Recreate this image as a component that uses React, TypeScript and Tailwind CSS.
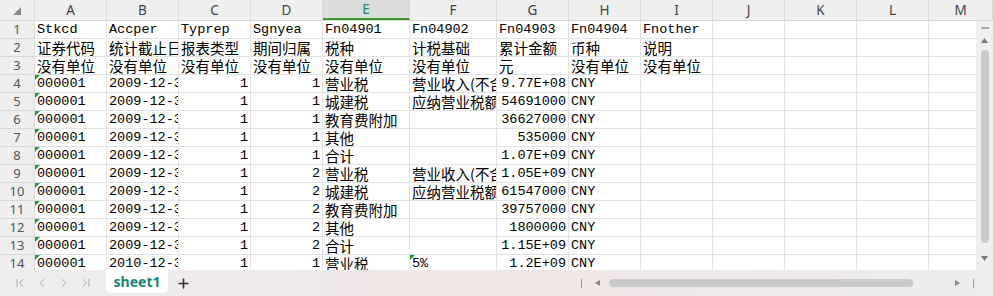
import { ChevronFirst, ChevronLast, ChevronLeft, ChevronRight, Plus } from "lucide-react";

const cols = [
  { l: "A", w: 72 },
  { l: "B", w: 72 },
  { l: "C", w: 72 },
  { l: "D", w: 72 },
  { l: "E", w: 87 },
  { l: "F", w: 87 },
  { l: "G", w: 72 },
  { l: "H", w: 72 },
  { l: "I", w: 72 },
  { l: "J", w: 72 },
  { l: "K", w: 72 },
  { l: "L", w: 72 },
  { l: "M", w: 64 },
];

const rows: string[][] = [
  ["Stkcd", "Accper", "Typrep", "Sgnyea", "Fn04901", "Fn04902", "Fn04903", "Fn04904", "Fnother"],
  ["证券代码", "统计截止日期", "报表类型", "期间归属", "税种", "计税基础", "累计金额", "币种", "说明"],
  ["没有单位", "没有单位", "没有单位", "没有单位", "没有单位", "没有单位", "元", "没有单位", "没有单位"],
  ["000001", "2009-12-31", "1", "1", "营业税", "营业收入(不含税)", "9.77E+08", "CNY", ""],
  ["000001", "2009-12-31", "1", "1", "城建税", "应纳营业税额", "54691000", "CNY", ""],
  ["000001", "2009-12-31", "1", "1", "教育费附加", "", "36627000", "CNY", ""],
  ["000001", "2009-12-31", "1", "1", "其他", "", "535000", "CNY", ""],
  ["000001", "2009-12-31", "1", "1", "合计", "", "1.07E+09", "CNY", ""],
  ["000001", "2009-12-31", "1", "2", "营业税", "营业收入(不含税)", "1.05E+09", "CNY", ""],
  ["000001", "2009-12-31", "1", "2", "城建税", "应纳营业税额", "61547000", "CNY", ""],
  ["000001", "2009-12-31", "1", "2", "教育费附加", "", "39757000", "CNY", ""],
  ["000001", "2009-12-31", "1", "2", "其他", "", "1800000", "CNY", ""],
  ["000001", "2009-12-31", "1", "2", "合计", "", "1.15E+09", "CNY", ""],
  ["000001", "2010-12-31", "1", "1", "营业税", "5%", "1.2E+09", "CNY", ""],
];

const cjk = /[\u4e00-\u9fff]/;

function Flag() {
  return (
    <span className="absolute left-0 top-0 h-0 w-0 border-r-[5px] border-t-[5px] border-r-transparent border-t-[#1f9a3c]" />
  );
}

function Cell({ text, w, right, flag }: { text: string; w: number; right: boolean; flag: boolean }) {
  const font = cjk.test(text)
    ? "font-['Noto_Sans_CJK_SC',sans-serif] text-[14.5px] pt-[2px]"
    : "font-['Liberation_Mono','Noto_Sans_CJK_SC',monospace] text-[13.5px] pt-[1px]";
  return (
    <div
      style={{ width: w }}
      className={`relative flex h-[18px] shrink-0 items-center overflow-hidden whitespace-nowrap border-b border-r border-[#e2e2e2] bg-white leading-none text-black ${right ? "justify-end pr-[2px]" : "pl-[2px]"} ${font}`}
    >
      {flag && <Flag />}
      <span>{text}</span>
    </div>
  );
}

export default function App() {
  return (
    <div className="flex h-[296px] w-[993px] flex-col overflow-hidden bg-white font-['Noto_Sans',sans-serif]">
      {/* column header */}
      <div className="flex h-[21px] shrink-0 border-b border-[#d6d6d6] bg-[#efefef] text-[13.5px] text-[#444]">
        <div className="flex w-[35px] shrink-0 items-center justify-center border-r border-[#dadada]">
          <svg width="8" height="8" viewBox="0 0 8 8" className="mt-[2px]">
            <polygon points="8,0 8,8 0,8" fill="#8a8a8a" />
          </svg>
        </div>
        {cols.map((c) => (
          <div
            key={c.l}
            style={{ width: c.w }}
            className={`flex shrink-0 items-center justify-center border-r border-[#dadada] ${c.l === "E" ? "border-b-2 border-b-[#3d9a2c] bg-[#dcdcdc] text-[#1d8a73]" : ""}`}
          >
            {c.l}
          </div>
        ))}
      </div>

      <div className="flex min-h-0 flex-1">
        <div className="min-w-0 flex-1 overflow-hidden">
          {rows.map((r, i) => (
            <div key={i} className="flex">
              <div className="flex h-[18px] w-[35px] shrink-0 items-center justify-center border-b border-r border-[#dadada] bg-[#efefef] text-[13px] text-[#555]">
                {i + 1}
              </div>
              {cols.map((c, j) => {
                const text = r[j] ?? "";
                const right = i >= 3 && (j === 2 || j === 3 || j === 6);
                const flag = (i >= 3 && j === 0) || (i === 13 && j === 5);
                return <Cell key={c.l} text={text} w={c.w} right={right} flag={flag} />;
              })}
            </div>
          ))}
        </div>

        {/* vertical scrollbar */}
        <div className="flex w-[17px] shrink-0 flex-col items-center bg-[#efefef] pt-[6px]">
          <div className="h-[2px] w-[8px] bg-[#a8a8a8]" />
          <svg width="7" height="5" viewBox="0 0 7 5" className="mt-[9px]">
            <polygon points="3.5,0 7,5 0,5" fill="#7a7a7a" />
          </svg>
          <div className="mt-[7px] h-[193px] w-[8px] rounded-full bg-[#c9c9c9]" />
          <svg width="7" height="5" viewBox="0 0 7 5" className="mt-auto mb-[9px]">
            <polygon points="0,0 7,0 3.5,5" fill="#7a7a7a" />
          </svg>
        </div>
      </div>

      {/* sheet tabs */}
      <div className="flex h-[26px] shrink-0 items-start bg-gradient-to-r from-[#eeeeee] via-[#f0e5e5] to-[#ededed]">
        <div className="flex h-[26px] items-center gap-[8px] pl-[13px] text-[#a0a0a0]">
          <ChevronFirst size={14} strokeWidth={1.5} />
          <ChevronLeft size={14} strokeWidth={1.5} />
          <ChevronRight size={14} strokeWidth={1.5} />
          <ChevronLast size={14} strokeWidth={1.5} />
        </div>
        <div className="ml-[13px] flex h-[23px] w-[62px] items-center justify-center rounded-b-[5px] bg-white text-[14px] font-bold text-[#16877a]">
          sheet1
        </div>
        <div className="flex h-[26px] items-center pl-[8px] text-[#333]">
          <Plus size={15} strokeWidth={2.5} />
        </div>
        <div className="ml-auto flex h-[26px] items-center pr-[19px]">
          <div className="h-[9px] w-[1px] bg-[#9a9a9a]" />
          <svg width="5" height="6" viewBox="0 0 5 6" className="ml-[13px]">
            <polygon points="0,3 5,0 5,6" fill="#8a8a8a" />
          </svg>
          <div className="ml-[9px] h-[8px] w-[304px] rounded-full bg-[#c9c9c9]" />
          <svg width="5" height="6" viewBox="0 0 5 6" className="ml-[42px]">
            <polygon points="0,0 5,3 0,6" fill="#8a8a8a" />
          </svg>
          <div className="ml-[13px] h-[9px] w-[1px] bg-[#9a9a9a]" />
        </div>
      </div>
    </div>
  );
}
